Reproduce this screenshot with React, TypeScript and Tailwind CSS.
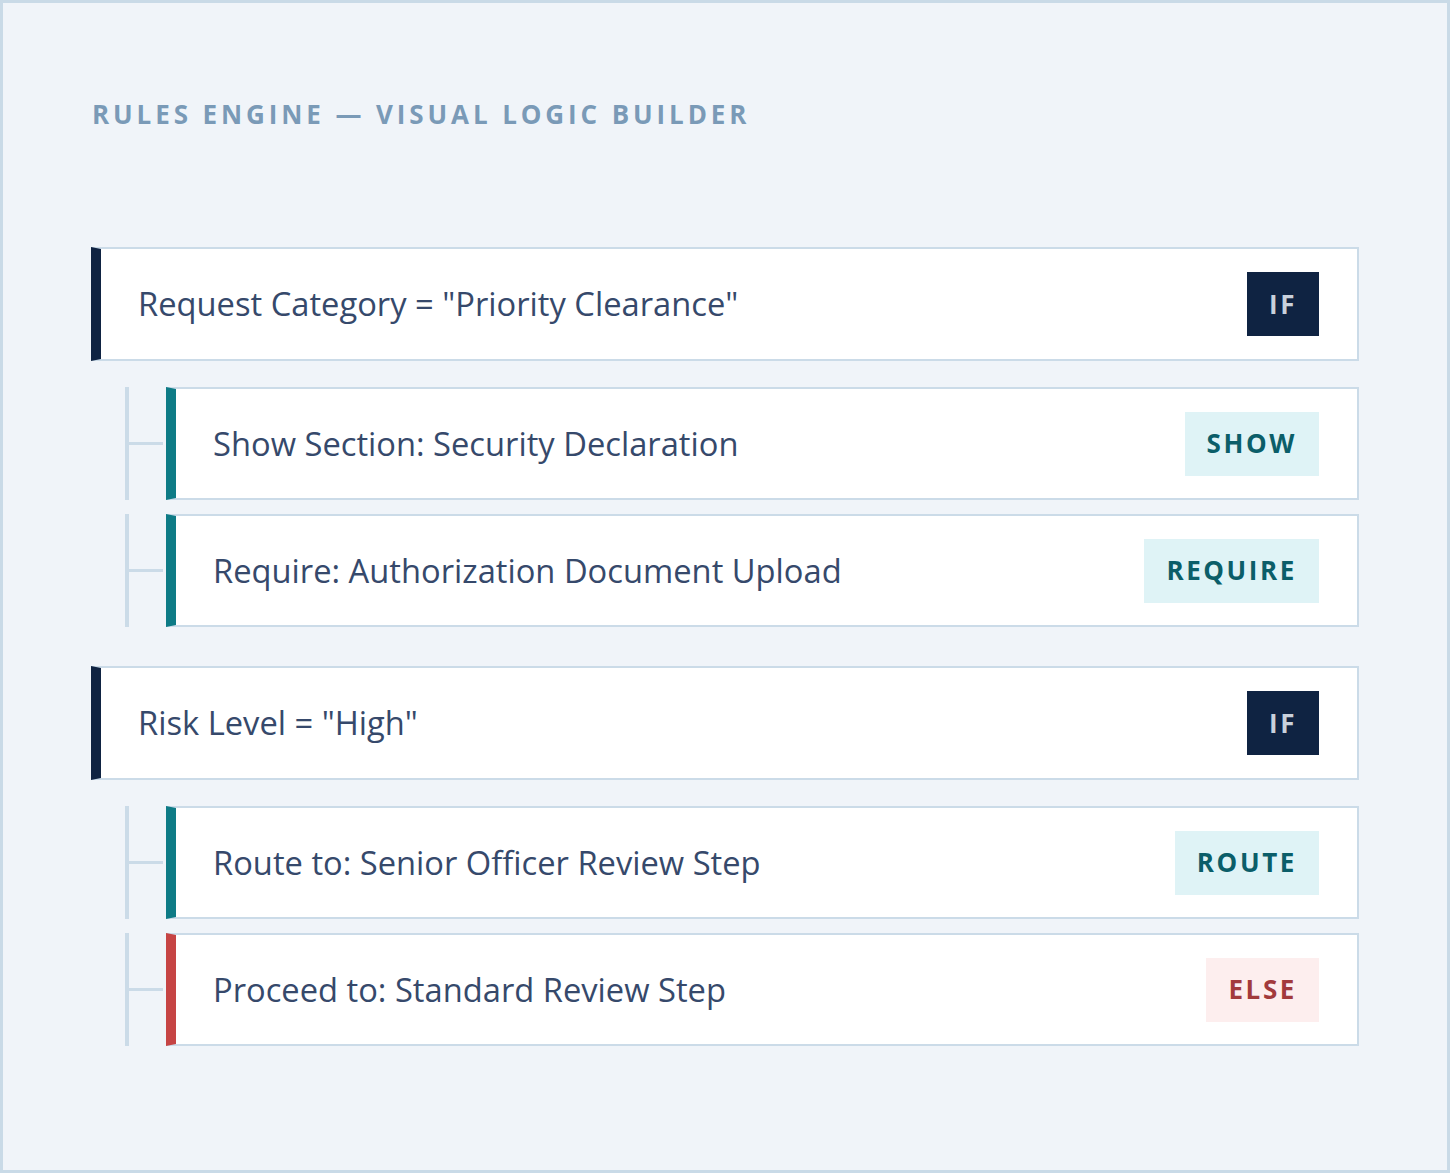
import React from 'react'

type Tone = 'if' | 'teal' | 'else'

interface Rule {
    text: string
    badge: string
    tone: Tone
}

interface Group {
    condition: string
    actions: Rule[]
}

const GROUPS: Group[] = [
    {
        condition: 'Request Category = "Priority Clearance"',
        actions: [
            { text: 'Show Section: Security Declaration', badge: 'SHOW', tone: 'teal' },
            { text: 'Require: Authorization Document Upload', badge: 'REQUIRE', tone: 'teal' },
        ],
    },
    {
        condition: 'Risk Level = "High"',
        actions: [
            { text: 'Route to: Senior Officer Review Step', badge: 'ROUTE', tone: 'teal' },
            { text: 'Proceed to: Standard Review Step', badge: 'ELSE', tone: 'else' },
        ],
    },
]

const BAR: Record<Tone, string> = {
    if: 'border-l-[#0f2342]',
    teal: 'border-l-[#0e7b86]',
    else: 'border-l-[#c64444]',
}

const BADGE: Record<Tone, string> = {
    if: 'bg-[#0f2342] text-[#c9d1dc]',
    teal: 'bg-[#dff3f6] text-[#0b5e69]',
    else: 'bg-[#fdeeee] text-[#a23a3c]',
}

function Card({ text, badge, tone }: Rule) {
    return (
        <div
            className={`flex-1 flex items-center justify-between bg-white border-2 border-[#cbdbe8] border-l-[10px] ${BAR[tone]} pl-[37px] pr-[38px]`}
        >
            <span className="text-[32.7px] text-[#36496b]">{text}</span>
            <span className={`h-[64px] flex items-center px-[22px] text-[26px] font-bold tracking-[0.1em] ${BADGE[tone]}`}>
                {badge}
            </span>
        </div>
    )
}

export default function App() {
    return (
        <div
            className="w-full min-h-[1173px] border-[3px] border-[#c9dae7] bg-[#f0f4f9] px-[88px] pt-[98px]"
            style={{ fontFamily: '"Open Sans", "Noto Sans", sans-serif' }}
        >
            <h1 className="text-[26px] leading-none font-bold tracking-[0.15em] text-[#7a9ab7] ml-[1px]">
                RULES ENGINE — VISUAL LOGIC BUILDER
            </h1>

            <div className="mt-[120px] flex flex-col gap-[39px]">
                {GROUPS.map((group) => (
                    <div key={group.condition} className="flex flex-col gap-[26px]">
                        <div className="flex h-[114px]">
                            <Card text={group.condition} badge="IF" tone="if" />
                        </div>
                        <div className="flex flex-col gap-[14px]">
                            {group.actions.map((action) => (
                                <div key={action.text} className="flex h-[113px]">
                                    {/* tree connector */}
                                    <div className="ml-[34px] w-[4px] bg-[#cbdbe8]"></div>
                                    <div className="w-[34px] flex items-center">
                                        <div className="h-[3px] w-full bg-[#cbdbe8]"></div>
                                    </div>
                                    <div className="w-[3px]"></div>
                                    <Card {...action} />
                                </div>
                            ))}
                        </div>
                    </div>
                ))}
            </div>
        </div>
    )
}
